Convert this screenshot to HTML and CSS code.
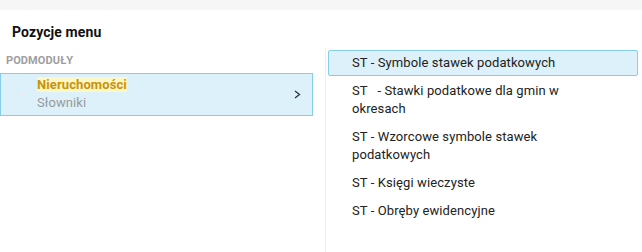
FILE: index.html
```html
<!DOCTYPE html>
<html lang="pl">
<head>
  <meta charset="UTF-8" />
  <title>Pozycje menu</title>
  <link rel="stylesheet" href="styles.css">
</head>
<body>
  <div class="topbar"></div>
  <h1 class="title">Pozycje menu</h1>
  <div class="columns">
    <div class="modules">
      <div class="section-label">PODMODUŁY</div>
      <div class="module active">
        <div class="tree"></div>
        <div class="module-text">
          <div class="module-name"><span class="mark">Nieruchomości</span></div>
          <div class="module-sub">Słowniki</div>
        </div>
        <svg class="chevron" width="7" height="9" viewBox="0 0 7 9">
          <path d="M1 1 L5.5 4.5 L1 8" fill="none" stroke="#333" stroke-width="1.3"/>
        </svg>
      </div>
    </div>
    <div class="entries">
      <div class="entry active"><span>ST - Symbole stawek podatkowych</span></div>
      <div class="entry"><span>ST &nbsp; - Stawki podatkowe dla gmin w okresach</span></div>
      <div class="entry"><span>ST - Wzorcowe symbole stawek podatkowych</span></div>
      <div class="entry"><span>ST - Księgi wieczyste</span></div>
      <div class="entry"><span>ST - Obręby ewidencyjne</span></div>
    </div>
  </div>
</body>
</html>
```

FILE: styles.css
```css
body {
  margin: 0;
  font-family: Roboto, "Liberation Sans", sans-serif;
  letter-spacing: 0.1px;
  background-color: #fff;
  color: #222;
}
.topbar {
  height: 10px;
  background-color: #f6f6f6;
}
.title {
  margin: 0;
  padding: 12px 0 6px 12px;
  font-size: 14px;
  line-height: 20px;
  font-weight: 700;
  color: #111;
}
.columns {
  display: flex;
  height: 204px;
}
.modules {
  width: 325px;
  border-right: 1px solid #eeeeee;
  padding-top: 6px;
}
.section-label {
  padding-left: 6px;
  font-size: 11px;
  line-height: 14px;
  font-weight: 700;
  color: #9e9e9e;
  margin-bottom: 5px;
}
.module {
  display: flex;
  width: 311px;
  border: 1px solid #d6dade;
}
.module.active {
  background-color: #dcf1fa;
  border-color: #86cde9;
}
.tree {
  width: 8px;
  margin-left: 16px;
  border-left: 1px solid #e6ecee;
  display: flex;
  align-items: center;
}
.tree::after {
  content: "";
  display: block;
  width: 8px;
  height: 1px;
  background-color: #e6ecee;
}
.module-text {
  flex: 1;
  padding: 2px 0 3px 11px;
  font-size: 13px;
  line-height: 18px;
}
.module-name {
  font-weight: 700;
  color: #c8930a;
}
.mark {
  background-color: #fdf6c6;
}
.module-sub {
  color: #9a9a9a;
}
.chevron {
  align-self: center;
  margin-right: 11px;
}
.entries {
  flex: 1;
  padding: 2px 4px 0 2px;
}
.entry {
  border: 1px solid transparent;
  padding: 3px 23px;
  margin-bottom: 2px;
  font-size: 13px;
  line-height: 18px;
}
.entry span {
  display: block;
  max-width: 248px;
}
.entry.active {
  background-color: #dcf1fa;
  border-color: #86cde9;
  border-radius: 2px;
}
```
